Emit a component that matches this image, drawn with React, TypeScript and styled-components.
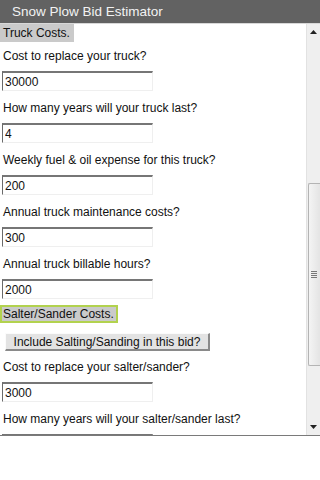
import React from "react";
import styled, { createGlobalStyle } from "styled-components";

const Global = createGlobalStyle`
  html, body { margin: 0; padding: 0; background: #fff; }
  body { font-family: "Liberation Sans", Arial, sans-serif; width: 320px; height: 480px; overflow: hidden; }
`;

const Header = styled.div`
  height: 23px;
  line-height: 23px;
  background: #626262;
  color: #f2f2f2;
  font-size: 13.5px;
  padding-left: 12px;
  border-bottom: 1px solid #d8d8d8;
  white-space: nowrap;
`;

const Viewport = styled.div`
  display: flex;
  height: 411px;
  border-bottom: 1px solid #7a7a7a;
  overflow: hidden;
`;

const Content = styled.div`
  flex: 1;
  overflow: hidden;
  display: flex;
  flex-direction: column;
  align-items: flex-start;
  font-size: 12px;
  color: #111;
`;

const Section = styled.div<{ $active?: boolean }>`
  flex: none;
  box-sizing: border-box;
  height: 18px;
  background: #cacaca;
  line-height: ${(p) => (p.$active ? "14px" : "18px")};
  padding: 0 ${(p) => (p.$active ? "2px" : "4px")} 0 ${(p) => (p.$active ? "1px" : "3px")};
  border: ${(p) => (p.$active ? "2px solid #b2d24e" : "none")};
  margin-top: ${(p) => (p.$active ? "3px" : "0")};
  font-size: 12px;
`;

const Question = styled.div`
  flex: none;
  box-sizing: border-box;
  height: 26px;
  line-height: 16px;
  padding: 6px 3px 4px;
  white-space: nowrap;
`;

const FieldRow = styled.div`
  flex: none;
  box-sizing: border-box;
  height: 26px;
  padding: 3px 2px;
`;

const Field = styled.input`
  display: block;
  box-sizing: border-box;
  width: 151px;
  height: 20px;
  margin: 0;
  padding: 0 2px;
  font-family: "Liberation Sans", Arial, sans-serif;
  font-size: 12px;
  color: #111;
  background: #fff;
  border-top: 2px solid #767676;
  border-left: 1px solid #6a6a6a;
  border-right: 1px solid #efefef;
  border-bottom: 1px solid #efefef;
  outline: none;
`;

const Toggle = styled.button`
  flex: none;
  box-sizing: border-box;
  width: 205px;
  height: 18px;
  margin: 10px 0 2px 5px;
  padding: 0;
  font-family: "Liberation Sans", Arial, sans-serif;
  font-size: 12px;
  color: #111;
  background: #e3e3e3;
  border-top: 1px solid #fbfbfb;
  border-left: 1px solid #fbfbfb;
  border-right: 2px solid #8a8a8a;
  border-bottom: 2px solid #8a8a8a;
`;

const ScrollBar = styled.div`
  width: 13px;
  background: #efefef;
  border-left: 1px solid #e2e2e2;
  display: flex;
  flex-direction: column;
  align-items: stretch;
`;

const Arrow = styled.div<{ $h: number }>`
  flex: none;
  height: ${(p) => p.$h}px;
  display: flex;
  align-items: center;
  justify-content: center;
`;

const Track = styled.div<{ $h: number }>`
  flex: none;
  height: ${(p) => p.$h}px;
`;

const Thumb = styled.div`
  flex: none;
  height: 183px;
  margin: 0 0 0 1px;
  box-sizing: border-box;
  background: linear-gradient(to right, #f4f4f4, #e4e4e4);
  border: 1px solid #b4b4b4;
  border-right: none;
  border-radius: 2px 0 0 2px;
  display: flex;
  align-items: center;
  justify-content: center;
`;

const Grip = styled.div`
  display: flex;
  flex-direction: column;
  gap: 1px;
  margin-left: -2px;
`;

const GripLine = styled.div`
  width: 6px;
  height: 1px;
  background: #777;
`;

const questions1: [string, string][] = [
  ["Cost to replace your truck?", "30000"],
  ["How many years will your truck last?", "4"],
  ["Weekly fuel & oil expense for this truck?", "200"],
  ["Annual truck maintenance costs?", "300"],
  ["Annual truck billable hours?", "2000"],
];

export default function App() {
  return (
    <>
      <Global />
      <Header>Snow Plow Bid Estimator</Header>
      <Viewport>
        <Content>
          <Section>Truck Costs.</Section>
          {questions1.map(([q, v]) => (
            <React.Fragment key={q}>
              <Question>{q}</Question>
              <FieldRow>
                <Field defaultValue={v} />
              </FieldRow>
            </React.Fragment>
          ))}
          <Section $active>Salter/Sander Costs.</Section>
          <Toggle>Include Salting/Sanding in this bid?</Toggle>
          <Question>Cost to replace your salter/sander?</Question>
          <FieldRow>
            <Field defaultValue="3000" />
          </FieldRow>
          <Question>How many years will your salter/sander last?</Question>
          <FieldRow>
            <Field defaultValue="" />
          </FieldRow>
        </Content>
        <ScrollBar>
          <Arrow $h={16}>
            <svg width="7" height="4" viewBox="0 0 7 4">
              <path d="M0 4 L3.5 0 L7 4 Z" fill="#222" />
            </svg>
          </Arrow>
          <Track $h={143} />
          <Thumb>
            <Grip>
              <GripLine />
              <GripLine />
              <GripLine />
              <GripLine />
            </Grip>
          </Thumb>
          <Track $h={53} />
          <Arrow $h={16}>
            <svg width="7" height="4" viewBox="0 0 7 4">
              <path d="M0 0 L7 0 L3.5 4 Z" fill="#222" />
            </svg>
          </Arrow>
        </ScrollBar>
      </Viewport>
    </>
  );
}
